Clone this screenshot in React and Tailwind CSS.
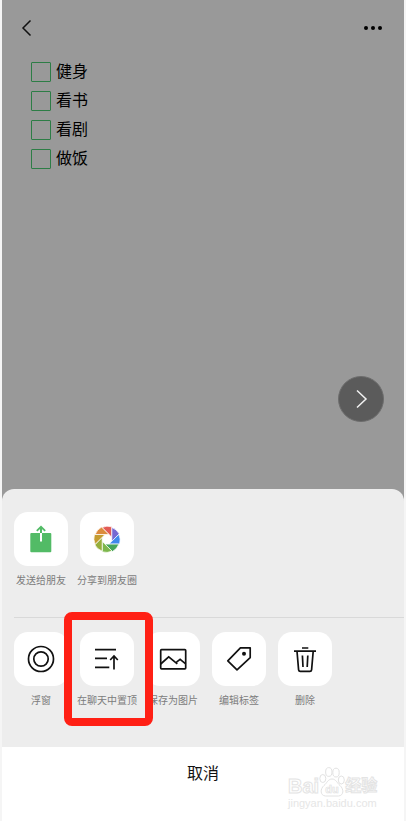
import React from 'react';

const todos = ['健身', '看书', '看剧', '做饭'];

const bladeColors = [
  '#e25b55',
  '#7569d2',
  '#3f88ec',
  '#45a55c',
  '#7db74c',
  '#96ae3c',
  '#c49c30',
  '#dc8b3c',
];

const Icon = ({ children }) => (
  <svg
    viewBox="0 0 54 54"
    className="size-[54px]"
    fill="none"
    stroke="#111111"
    strokeWidth="1.7"
    aria-hidden="true"
  >
    {children}
  </svg>
);

const SendIcon = () => (
  <Icon>
    <rect x="16.3" y="21" width="21" height="19.3" rx="1" fill="#52bb66" stroke="none" />
    <path d="M27 21V15" stroke="#52bb66" strokeWidth="2" />
    <path d="M22.8 18.8 27 14.8l4.2 4" stroke="#52bb66" strokeWidth="1.8" />
    <path d="M27 21v8.5" stroke="#ffffff" strokeWidth="2" />
  </Icon>
);

const MomentsIcon = () => (
  <Icon>
    {bladeColors.map((color, i) => (
      <path
        key={color}
        d="M4.8-2-5-11.8A13.400 13.400 0 0 1 4.800-12.500Z"
        transform={`translate(27 27.3) rotate(${i * 45})`}
        fill={color}
        stroke="#ffffff"
        strokeWidth="0.7"
      />
    ))}
  </Icon>
);

const FloatIcon = () => (
  <Icon>
    <circle cx="27" cy="27" r="12.5" />
    <circle cx="27" cy="27" r="7.2" />
  </Icon>
);

const PinTopIcon = () => (
  <Icon>
    <path d="M15 17.6h21M15 26.4h12M15 35.4h14.3M34 37.5V24M30.2 28l3.8-4 3.8 4" />
  </Icon>
);

const ImageIcon = () => (
  <Icon>
    <rect x="14.7" y="17.6" width="25" height="19.2" rx="0.8" />
    <path d="m14.7 32 8-7.2 8.6 7M30.5 30.2l3.6-2.8 5.6 4.4" />
  </Icon>
);

const TagIcon = () => (
  <Icon>
    <path d="M28.4 15.8h9.800v9.800L25 37.800l-9.200-9Z" strokeLinejoin="round" />
    <circle cx="32" cy="21.8" r="2" fill="#111111" stroke="none" />
  </Icon>
);

const TrashIcon = () => (
  <Icon>
    <path d="M24 16h6.3M16 19.2h22M19 19.2l1.6 18.6q.2 1.5 1.7 1.5h9.6q1.5 0 1.7-1.5l1.6-18.6M24.4 23.5 25 35M29.8 23.5 29.2 35" />
  </Icon>
);

const shareActions = [
  { label: '发送给朋友', icon: <SendIcon /> },
  { label: '分享到朋友圈', icon: <MomentsIcon /> },
];

const noteActions = [
  { label: '浮窗', icon: <FloatIcon /> },
  { label: '在聊天中置顶', icon: <PinTopIcon />, highlighted: true },
  { label: '保存为图片', icon: <ImageIcon /> },
  { label: '编辑标签', icon: <TagIcon /> },
  { label: '删除', icon: <TrashIcon /> },
];

const ActionRow = ({ actions }) => (
  <div className="flex gap-3 px-3">
    {actions.map((action) => (
      <button
        key={action.label}
        type="button"
        className="relative flex w-[54px] flex-col items-center gap-2"
      >
        <span className="rounded-[14px] bg-white">{action.icon}</span>
        <span className="whitespace-nowrap text-[10px] leading-[14px] text-[#7c7c7c]">
          {action.label}
        </span>
        {action.highlighted && (
          <span className="absolute -top-5 -right-[19px] -bottom-[18px] -left-4 z-10 rounded-lg border-8 border-[#ff2015]" />
        )}
      </button>
    ))}
  </div>
);

const Watermark = () => (
  <div className="absolute top-5 right-[26px] flex w-[90px] flex-col text-white">
    <div className="flex h-[30px] items-end">
      <span className="text-[20px] leading-[22px] font-bold [-webkit-text-stroke:1px_#e4e4e4]">Bai</span>
      <svg viewBox="0 0 26 30" className="h-[30px] w-[26px] shrink-0" fill="#ffffff" stroke="#e2e2e2">
        <ellipse cx="3.8" cy="11.5" rx="3" ry="4" />
        <ellipse cx="9.8" cy="5" rx="3.2" ry="4.4" />
        <ellipse cx="17" cy="5.6" rx="3.2" ry="4.4" />
        <ellipse cx="22.3" cy="13" rx="3" ry="4" />
        <path d="M13 12c4 0 5 4 8 6.500 4 3.500 4 10-1.500 10.500H6.500C1 28.500 1 22 5 18.500 8 16 9 12 13 12Z" />
        <text
          x="13"
          y="26"
          textAnchor="middle"
          fontSize="11"
          fontWeight="bold"
          strokeWidth="0.7"
        >
          du
        </text>
      </svg>
      <span className="text-[16px] leading-[22px] font-bold whitespace-nowrap [-webkit-text-stroke:1px_#e4e4e4]">
        经验
      </span>
    </div>
    <span className="text-[11px] leading-3 whitespace-nowrap text-[#e6e6e6]">jingyan.baidu.com</span>
  </div>
);

const App = () => {
  return (
    <div className="min-h-screen bg-[#f5f5f5] px-[2px] font-['Liberation_Sans','Noto_Sans_CJK_SC',sans-serif]">
      <div className="flex min-h-screen flex-col bg-[#999999]">
        <header className="flex h-14 items-center justify-between pr-[21px] pl-[18px]">
          <button type="button" aria-label="返回">
            <svg viewBox="0 0 14 18" className="h-[18px] w-[14px]" fill="none" stroke="#111111" strokeWidth="1.5">
              <path d="M10.500 1.500 3 9l7.500 7.500" />
            </svg>
          </button>
          <button type="button" aria-label="更多">
            <svg viewBox="0 0 20 6" className="h-[6px] w-5" fill="#000000">
              <circle cx="3" cy="3" r="2" />
              <circle cx="10" cy="3" r="2" />
              <circle cx="17" cy="3" r="2" />
            </svg>
          </button>
        </header>

        <main className="flex flex-1 flex-col">
          <ul className="flex flex-col gap-[9px] px-[29px] pt-[6px]">
            {todos.map((todo) => (
              <li key={todo}>
                <label className="flex h-5 items-center gap-[5px] text-[16px] leading-[22px] text-black">
                  <input
                    type="checkbox"
                    className="size-5 appearance-none rounded-[1px] border border-[#2d7d46]"
                  />
                  {todo}
                </label>
              </li>
            ))}
          </ul>
          <button
            type="button"
            aria-label="下一页"
            className="mt-auto mr-5 mb-[67px] flex size-[46px] items-center justify-center self-end rounded-full border border-[#6d6d6d] bg-[#5b5b5b]"
          >
            <svg viewBox="0 0 14 20" className="h-5 w-[14px]" fill="none" stroke="#f2f2f2" strokeWidth="1.5">
              <path d="m3 1.500 9 8.500-9 8.500" />
            </svg>
          </button>
        </main>

        <section className="overflow-hidden rounded-t-xl bg-[#ededed]">
          <div className="pt-[23px] pb-[39px]">
            <ActionRow actions={shareActions} />
            <hr className="mt-[29px] mb-[14px] ml-3 border-[#d9d9d9]" />
            <ActionRow actions={noteActions} />
          </div>
          <footer className="relative bg-white pb-5">
            <button type="button" className="h-[54px] w-full text-[16px] text-[#111111]">
              取消
            </button>
            <Watermark />
          </footer>
        </section>
      </div>
    </div>
  );
};

export default App;
